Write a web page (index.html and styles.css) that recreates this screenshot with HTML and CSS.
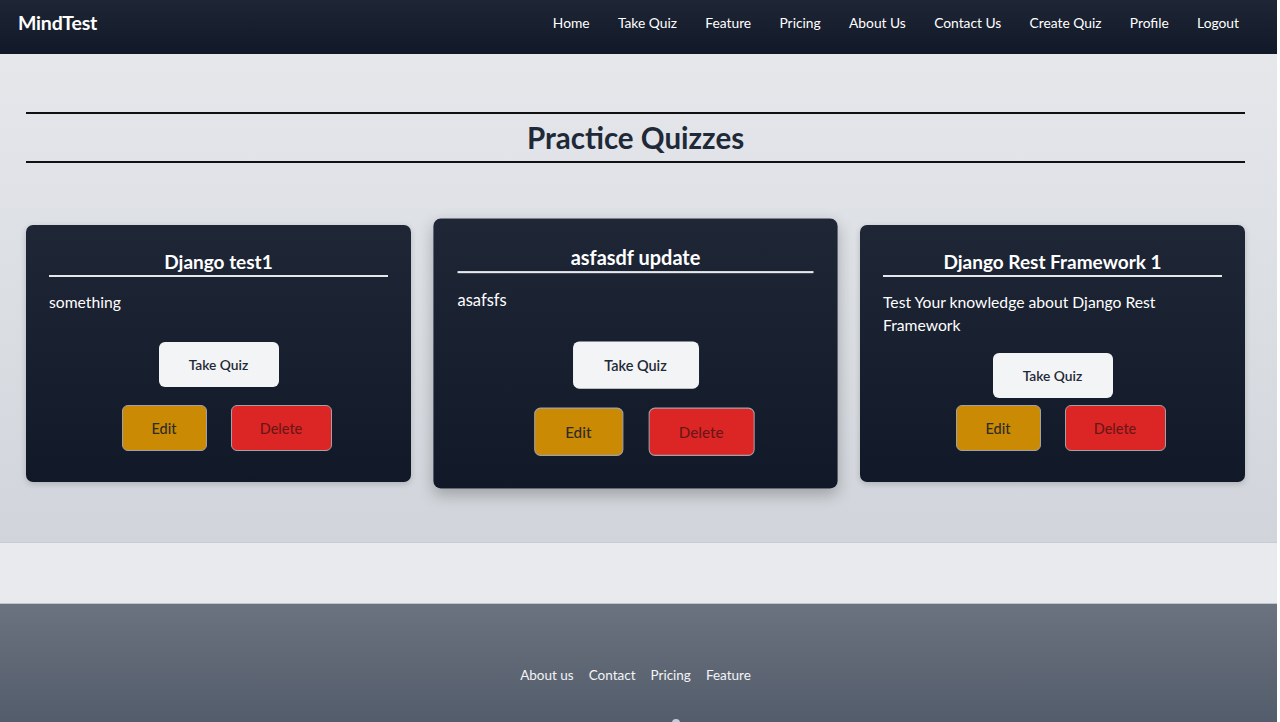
FILE: index.html
```html
<!DOCTYPE html>
<html lang="en">
<head>
<meta charset="utf-8">
<title>MindTest - Practice Quizzes</title>
<link rel="stylesheet" href="styles.css">
</head>
<body>
<div class="page">
  <header class="navbar">
    <a class="brand" href="#">MindTest</a>
    <nav class="nav-links">
      <a href="#">Home</a>
      <a href="#">Take Quiz</a>
      <a href="#">Feature</a>
      <a href="#">Pricing</a>
      <a href="#">About Us</a>
      <a href="#">Contact Us</a>
      <a href="#">Create Quiz</a>
      <a href="#">Profile</a>
      <a href="#">Logout</a>
    </nav>
  </header>

  <main class="quizzes">
    <h1 class="section-title">Practice Quizzes</h1>
    <div class="card-grid">
      <article class="card">
        <h2 class="card-title">Django test1</h2>
        <p class="card-desc">something</p>
        <div class="card-main-action"><a class="btn btn-take" href="#">Take Quiz</a></div>
        <div class="card-actions">
          <a class="btn btn-edit" href="#">Edit</a>
          <a class="btn btn-delete" href="#">Delete</a>
        </div>
      </article>
      <article class="card card--hover">
        <h2 class="card-title">asfasdf update</h2>
        <p class="card-desc">asafsfs</p>
        <div class="card-main-action"><a class="btn btn-take" href="#">Take Quiz</a></div>
        <div class="card-actions">
          <a class="btn btn-edit" href="#">Edit</a>
          <a class="btn btn-delete" href="#">Delete</a>
        </div>
      </article>
      <article class="card">
        <h2 class="card-title">Django Rest Framework 1</h2>
        <p class="card-desc">Test Your knowledge about Django Rest Framework</p>
        <div class="card-main-action"><a class="btn btn-take" href="#">Take Quiz</a></div>
        <div class="card-actions">
          <a class="btn btn-edit" href="#">Edit</a>
          <a class="btn btn-delete" href="#">Delete</a>
        </div>
      </article>
    </div>
  </main>

  <div class="spacer"></div>

  <footer class="footer">
    <nav class="footer-links">
      <a href="#">About us</a>
      <a href="#">Contact</a>
      <a href="#">Pricing</a>
      <a href="#">Feature</a>
    </nav>
    <div class="footer-mark"></div>
  </footer>
</div>
</body>
</html>
```

FILE: styles.css
```css
* { box-sizing: border-box; }

html, body {
  margin: 0;
  padding: 0;
}

body {
  font-family: "Lato", "Noto Sans", "Liberation Sans", sans-serif;
  background: #ffffff;
  color: #1f2937;
}

.page {
  width: 1277px;
  background: #e9eaee;
}

a { text-decoration: none; color: inherit; }

/* Navbar */
.navbar {
  height: 54px;
  display: flex;
  align-items: center;
  justify-content: space-between;
  padding: 0 38px 10px 18px;
  background: linear-gradient(to bottom, #1e2636, #111827);
  color: #ffffff;
}

.brand {
  font-size: 19.5px;
  font-weight: 700;
  letter-spacing: -0.2px;
}

.nav-links {
  display: flex;
  gap: 28.3px;
  font-size: 13.8px;
}

/* Main */
.quizzes {
  height: 489px;
  padding: 58px 32px 0 26px;
  background: linear-gradient(to bottom, #e5e7eb, #d1d5db);
  border-bottom: 1px solid #c9ccd2;
}

.section-title {
  margin: 0;
  padding: 6px 0;
  font-size: 29.5px;
  line-height: 35px;
  font-weight: 700;
  text-align: center;
  color: #1f2937;
  border-top: 2px solid #111111;
  border-bottom: 2px solid #111111;
}

.card-grid {
  margin-top: 62px;
  display: grid;
  grid-template-columns: repeat(3, 1fr);
  gap: 32px;
}

.card {
  display: flex;
  flex-direction: column;
  padding: 24px 23px 31px;
  border-radius: 7px;
  background: linear-gradient(to bottom, #1f2737, #111827);
  color: #ffffff;
  box-shadow: 0 2px 6px rgba(0, 0, 0, 0.18);
}

.card--hover {
  transform: scale(1.05);
  box-shadow: 0 6px 14px rgba(0, 0, 0, 0.25);
}

.card-title {
  margin: 0;
  font-size: 19px;
  line-height: 26px;
  font-weight: 700;
  text-align: center;
  border-bottom: 2px solid #e5e7eb;
}

.card-desc {
  margin: 14px 0 0;
  font-size: 15.7px;
  line-height: 23px;
}

.card-main-action {
  flex: 1;
  display: flex;
  align-items: center;
  justify-content: center;
  padding: 16px 0 7px;
}

.card-actions {
  display: flex;
  justify-content: center;
  gap: 24px;
  padding-left: 16px;
}

.btn {
  display: inline-flex;
  align-items: center;
  justify-content: center;
  border-radius: 6px;
  font-size: 14.5px;
}

.btn-take {
  width: 120px;
  height: 45px;
  background: #f3f4f6;
  color: #1f2937;
  font-weight: 600;
  font-size: 13.8px;
}

.btn-edit,
.btn-delete {
  height: 46px;
  border: 1px solid #a1a1aa;
  font-weight: 500;
}

.btn-edit {
  width: 85px;
  background: #ca8a04;
  color: #2f2b25;
}

.btn-delete {
  width: 101px;
  background: #dc2626;
  color: #6b1616;
}

/* Spacer + footer */
.spacer {
  height: 60px;
  background: #e9eaee;
}

.footer {
  height: 200px;
  padding: 61px 6px 0 0;
  background: linear-gradient(to bottom, #6b7280, #4b5563 160px);
  border-top: 1px solid #c0c4cb;
  color: #f3f4f6;
  text-align: center;
}

.footer-links {
  display: flex;
  justify-content: center;
  gap: 15px;
  font-size: 13.5px;
  line-height: 20px;
}

.footer-mark {
  width: 8px;
  height: 8px;
  margin: 34px auto 0;
  border-radius: 50%;
  background: #c7ccd4;
  transform: translateX(40px);
}
```
